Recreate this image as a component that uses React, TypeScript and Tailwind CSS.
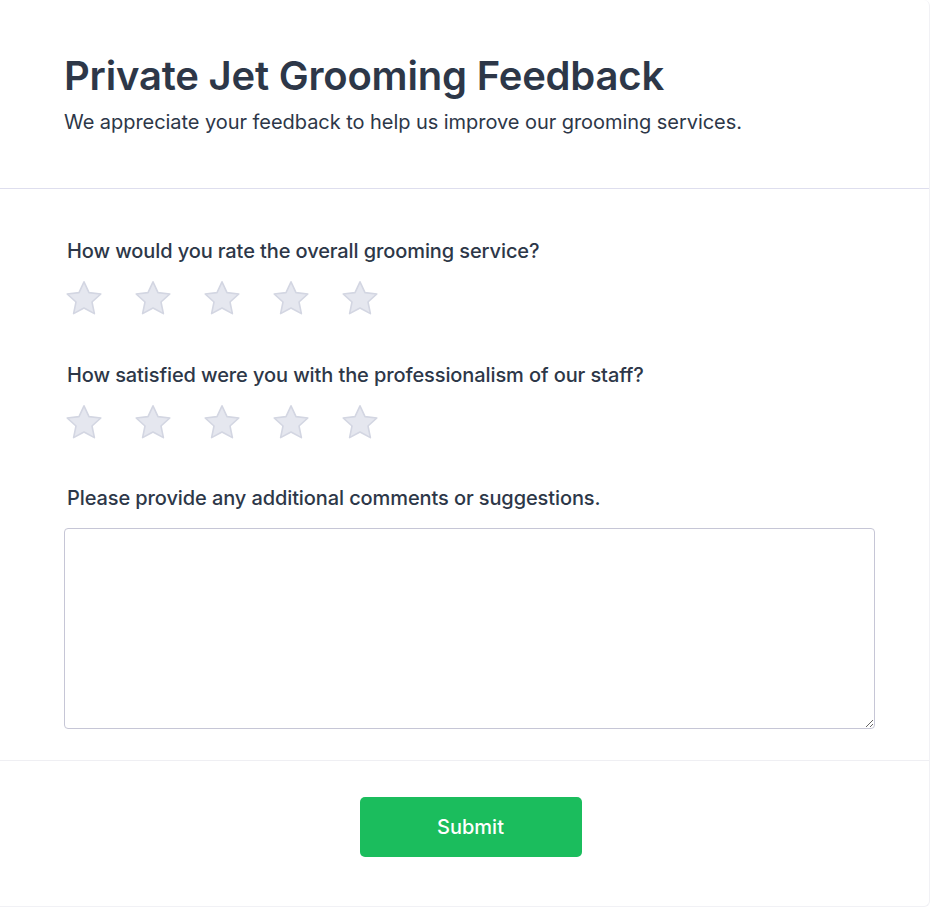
const questions = [
  "How would you rate the overall grooming service?",
  "How satisfied were you with the professionalism of our staff?",
];

function Star() {
  return (
    <svg width="38" height="36" viewBox="0 0 38 36" className="shrink-0">
      <path
        d="M19 1.8l5 10.8 11.8 1.4-8.8 8 2.4 11.6L19 28 8.6 33.6 11 22l-8.8-8 11.8-1.4z"
        fill="#e5e7ef"
        stroke="#d3d6e2"
        strokeWidth="1.6"
        strokeLinejoin="round"
      />
    </svg>
  );
}

function StarRow() {
  return (
    <div className="flex gap-[31px] pl-[1px]">
      {[1, 2, 3, 4, 5].map((n) => (
        <Star key={n} />
      ))}
    </div>
  );
}

export default function App() {
  return (
    <div className="min-h-screen bg-white font-['Inter',sans-serif] text-[#2d3748]">
      <div className="w-[930px] h-[907px] bg-white border-r border-b border-[#f1f1f5] rounded-br-md rounded-tr-md flex flex-col">
        <header className="px-16 pt-[52px] pb-[52px] border-b border-[#dedeee]">
          <h1 className="text-[40px] leading-[48px] font-semibold tracking-[-0.2px]">Private Jet Grooming Feedback</h1>
          <p className="mt-[8px] text-xl leading-7 tracking-[-0.05px]">We appreciate your feedback to help us improve our grooming services.</p>
        </header>

        <section className="px-16 pt-12 pb-[31px] border-b border-[#efeff3]">
          {questions.map((q, i) => (
            <div key={i} className={i === 0 ? "" : "mt-[45px]"}>
              <p className="pl-[3px] text-xl leading-7 font-medium tracking-[-0.1px]">{q}</p>
              <div className="mt-[15px]">
                <StarRow />
              </div>
            </div>
          ))}
          <p className="mt-[44px] pl-[3px] text-xl leading-7 font-medium tracking-[-0.1px]">
            Please provide any additional comments or suggestions.
          </p>
          <textarea className="mt-[16px] block w-[811px] h-[201px] border border-[#c6c6d6] rounded-[4px] p-3 outline-none resize-y" />
        </section>

        <footer className="flex justify-center pt-[36px] pl-3">
          <button className="w-[222px] h-[60px] rounded-[5px] bg-[#1bbd5d] text-white text-xl font-medium">Submit</button>
        </footer>
      </div>
    </div>
  );
}
